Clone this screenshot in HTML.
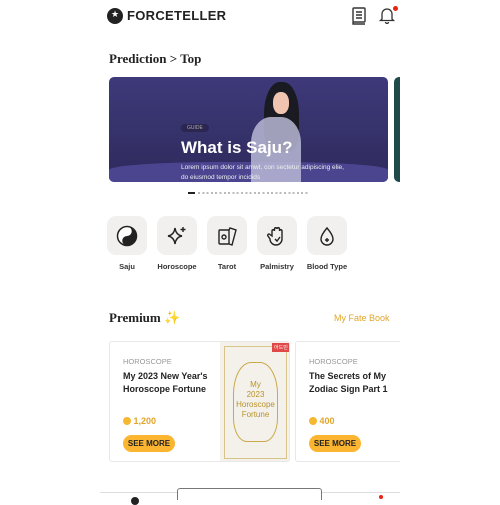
<!DOCTYPE html>
<html><head><style>
*{margin:0;padding:0;box-sizing:border-box}
body{width:500px;height:500px;overflow:hidden;background:#fff;font-family:"Liberation Sans",sans-serif;position:relative;color:#222}
.a{position:absolute}
.ib{position:absolute;top:216px;width:40px;height:39px;background:#f1f0ee;border-radius:9px;display:flex;align-items:center;justify-content:center}
.lb{position:absolute;top:262px;font-size:7.5px;font-weight:bold;color:#333;text-align:center;width:60px}
.btn{position:absolute;background:#fbb531;border-radius:9px;font-size:8px;font-weight:bold;color:#222;text-align:center;line-height:17px;width:52px;height:17px}
</style></head><body>
<div class="a" style="left:107px;top:8px;width:16px;height:16px;border-radius:50%;background:#222"><span style="position:absolute;left:4px;top:1px;color:#fff;font-size:9px">★</span></div>
<div class="a" style="left:127px;top:8px;font-size:13px;font-weight:bold;letter-spacing:0.3px;color:#222">FORCETELLER</div>
<svg class="a" style="left:351px;top:7px" width="16" height="18" viewBox="0 0 16 18" fill="none" stroke="#333" stroke-width="1.4"><rect x="2" y="1" width="12" height="14" rx="1"/><path d="M2 15v2h12M5 5h6M5 8h6M5 11h6"/></svg>
<svg class="a" style="left:378px;top:6px" width="18" height="18" viewBox="0 0 18 18" fill="none" stroke="#333" stroke-width="1.3"><path d="M4 13V8a5 5 0 0110 0v5l1.5 1.5h-13zM7.5 16a1.5 1.5 0 003 0"/></svg>
<div class="a" style="left:393px;top:6px;width:5px;height:5px;border-radius:50%;background:#e21"></div>
<div class="a" style="left:109px;top:51px;font-family:'Liberation Serif',serif;font-weight:bold;font-size:13px">Prediction &gt; Top</div>
<div class="a" style="left:109px;top:77px;width:279px;height:105px;border-radius:5px;overflow:hidden;background:linear-gradient(#3e3a7a,#2e2a5c)">
 <div class="a" style="left:0;bottom:0;width:279px;height:20px;background:#4b4590;border-radius:40% 40% 0 0"></div>
 <div class="a" style="left:140px;top:0;width:60px;height:105px;"><div class="a" style="left:15px;top:5px;width:35px;height:70px;background:#1a1a22;border-radius:45% 45% 30% 30%"></div><div class="a" style="left:24px;top:15px;width:16px;height:22px;background:#f0c4b0;border-radius:45%"></div><div class="a" style="left:2px;top:40px;width:50px;height:65px;background:#b9b8d6;opacity:.85;border-radius:40% 40% 0 0"></div></div>
 <div class="a" style="left:72px;top:47px;background:#2a2650;border-radius:6px;padding:1px 6px;font-size:5px;color:#aaa">GUIDE</div>
 <div class="a" style="left:72px;top:61px;color:#fff;font-weight:bold;font-size:17px">What is Saju?</div>
 <div class="a" style="left:72px;top:86px;color:#eee;font-size:6.5px;line-height:10px;width:170px">Lorem ipsum dolor sit amwt, con sectetur adipiscing elie, do eiusmod tempor incidids</div>
</div>
<div class="a" style="left:394px;top:77px;width:6px;height:105px;background:#1e4a4a;border-radius:5px 0 0 5px"></div>
<div class="a" style="left:188px;top:192px;width:7px;height:2px;background:#222"></div>
<div class="a" style="left:198px;top:192px;width:112px;height:2px;background:repeating-linear-gradient(90deg,#bbb 0 2px,transparent 2px 4.3px)"></div>
<div class="ib" style="left:107px"><svg width="22" height="22" viewBox="0 0 22 22"><circle cx="11" cy="11" r="9.5" fill="#fff" stroke="#222" stroke-width="1.5"/><path d="M11 1.5a9.5 9.5 0 010 19 4.75 4.75 0 010-9.5 4.75 4.75 0 000-9.5" fill="#222"/><circle cx="11" cy="6.25" r="1.4" fill="#fff"/><circle cx="11" cy="15.75" r="1.4" fill="#222"/></svg></div>
<div class="ib" style="left:157px"><svg width="22" height="22" viewBox="0 0 22 22" fill="none" stroke="#222" stroke-width="1.4"><path d="M9 3q1 7 7 8-6 1-7 8-1-7-7-8 6-1 7-8zM17 2v5M14.5 4.5h5"/></svg></div>
<div class="ib" style="left:207px"><svg width="22" height="22" viewBox="0 0 22 22" fill="none" stroke="#222" stroke-width="1.4"><rect x="3" y="5" width="10" height="14" rx="1"/><path d="M13 5l1-2 6 2-4 15-3-1"/><circle cx="8" cy="12" r="2"/></svg></div>
<div class="ib" style="left:257px"><svg width="22" height="22" viewBox="0 0 22 22" fill="none" stroke="#222" stroke-width="1.4"><path d="M6 11V6a1.2 1.2 0 012.5 0V4a1.2 1.2 0 012.5 0v0a1.2 1.2 0 012.5 0v2a1.2 1.2 0 012.5 0v8a6 6 0 01-6 6 6 6 0 01-6-6l-2-3a1.2 1.2 0 012-1.5z"/><path d="M9 14l2 2 3-4"/></svg></div>
<div class="ib" style="left:307px"><svg width="22" height="22" viewBox="0 0 22 22" fill="none" stroke="#222" stroke-width="1.4"><path d="M11 3q6 7 6 11a6 6 0 01-12 0q0-4 6-11zM11 13v4M9 15h4"/></svg></div>
<div class="lb" style="left:97px">Saju</div><div class="lb" style="left:147px">Horoscope</div><div class="lb" style="left:197px">Tarot</div><div class="lb" style="left:247px">Palmistry</div><div class="lb" style="left:297px">Blood Type</div>
<div class="a" style="left:109px;top:310px;font-family:'Liberation Serif',serif;font-weight:bold;font-size:13px">Premium <span style="color:#f5c842">✨</span></div>
<div class="a" style="left:334px;top:313px;font-size:9px;color:#e0a62a">My Fate Book</div>
<div class="a" style="left:109px;top:341px;width:181px;height:121px;border:1px solid #e8e8e8;border-radius:3px;overflow:hidden">
 <div class="a" style="left:13px;top:15px;font-size:7.5px;color:#999">HOROSCOPE</div>
 <div class="a" style="left:13px;top:28px;font-size:9px;font-weight:bold;line-height:13px;width:100px">My 2023 New Year's Horoscope Fortune</div>
 <div class="a" style="left:13px;top:74px;font-size:9px;color:#e0a62a;font-weight:bold"><span style="display:inline-block;width:8px;height:8px;border-radius:50%;background:#f5b830;vertical-align:-1px"></span> 1,200</div>
 <div class="btn" style="left:13px;top:93px">SEE MORE</div>
 <div class="a" style="left:110px;top:0;width:71px;height:121px;background:#f3f1ea">
  <div class="a" style="left:4px;top:4px;width:63px;height:113px;border:1px solid #d8c48a"></div>
  <div class="a" style="left:13px;top:20px;width:45px;height:80px;border:1px solid #c9a94a;border-radius:40% 40% 30% 30%"></div>
  <div class="a" style="left:0;top:38px;width:71px;text-align:center;font-size:8px;color:#b8922a;line-height:10px">My<br>2023<br>Horoscope<br>Fortune</div>
  <div class="a" style="left:52px;top:1px;background:#e04848;color:#fff;font-size:5px;padding:1px 2px">어드민</div>
 </div>
</div>
<div class="a" style="left:295px;top:341px;width:105px;height:121px;border:1px solid #e8e8e8;border-right:none;border-radius:3px 0 0 3px;overflow:hidden">
 <div class="a" style="left:13px;top:15px;font-size:7.5px;color:#999">HOROSCOPE</div>
 <div class="a" style="left:13px;top:28px;font-size:9px;font-weight:bold;line-height:13px;width:95px">The Secrets of My Zodiac Sign Part 1</div>
 <div class="a" style="left:13px;top:74px;font-size:9px;color:#e0a62a;font-weight:bold"><span style="display:inline-block;width:8px;height:8px;border-radius:50%;background:#f5b830;vertical-align:-1px"></span> 400</div>
 <div class="btn" style="left:13px;top:93px">SEE MORE</div>
</div>
<div class="a" style="left:100px;top:492px;width:300px;height:1px;background:#ddd"></div>
<div class="a" style="left:177px;top:488px;width:145px;height:12px;border:1px solid #777;border-bottom:none;border-radius:3px 3px 0 0;background:#fff"></div>
<div class="a" style="left:131px;top:497px;width:8px;height:8px;border-radius:50%;background:#222"></div>
<div class="a" style="left:379px;top:495px;width:4px;height:4px;border-radius:50%;background:#e21"></div>
</body></html>
